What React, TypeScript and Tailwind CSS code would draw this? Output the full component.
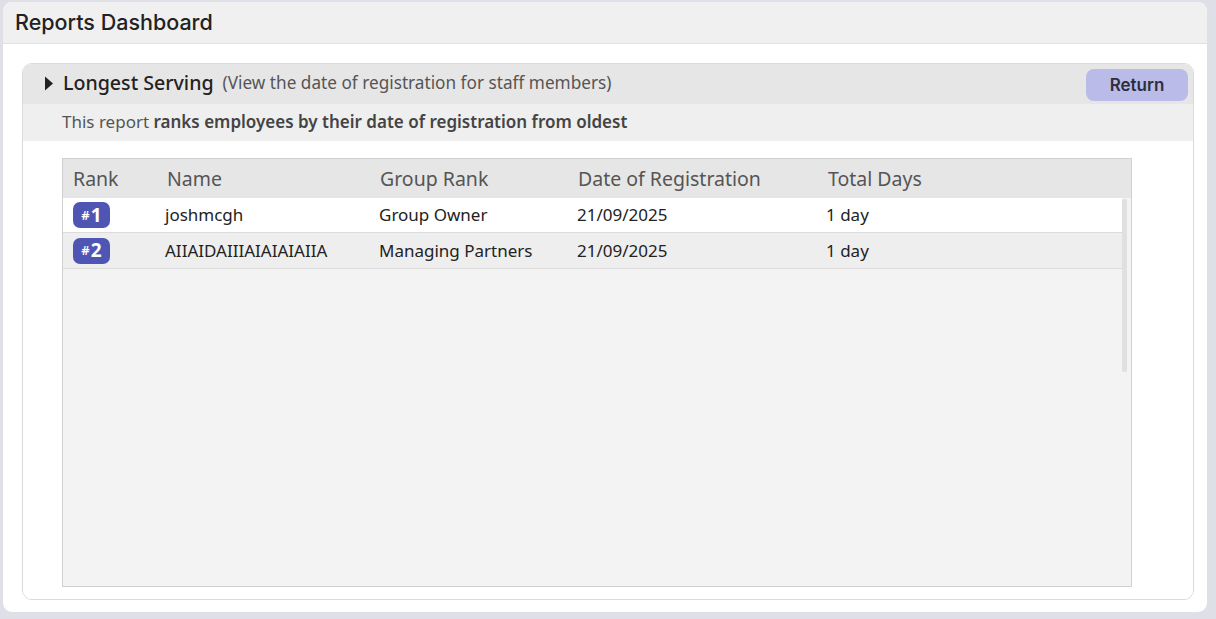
import React from "react";

const rows = [
  { rank: 1, name: "joshmcgh", group: "Group Owner", date: "21/09/2025", days: "1 day" },
  { rank: 2, name: "AIIAIDAIIIAIAIAIAIIA", group: "Managing Partners", date: "21/09/2025", days: "1 day" },
];

export default function App() {
  return (
    <div
      className="w-[1216px] h-[619px] bg-[#dfdfe7] pt-[2px] pl-[3px] pr-[9px] pb-[7px] flex"
      style={{ fontFamily: '"Noto Sans", sans-serif' }}
    >
      <div className="flex-1 flex flex-col bg-white rounded-[9px] overflow-hidden">
        <div className="h-[42px] shrink-0 bg-[#f0f0f0] border-b border-[#e2e2e2] flex items-center px-[12px]">
          <span
            className="text-[21.5px] text-[#222] font-medium"
            style={{ fontFamily: 'Inter, "Noto Sans", sans-serif' }}
          >
            Reports Dashboard
          </span>
        </div>
        <div className="flex-1 flex flex-col pt-[19px] pl-[19px] pr-[13px] pb-[12px]">
          <div className="flex-1 flex flex-col border border-[#dadada] rounded-[10px] overflow-hidden">
            <div className="h-[40px] shrink-0 bg-[#e6e6e6] flex items-center pl-[21px] pr-[5px]">
              <svg width="10" height="15" viewBox="0 0 10 15" className="mr-[9px] -mt-[2px]">
                <path d="M1 0.5 L9 7.5 L1 14.5 Z" fill="#222" />
              </svg>
              <span className="text-[19.6px] text-[#222] font-medium -mt-[3px]">Longest Serving</span>
              <span className="text-[17.2px] text-[#555] ml-[9px] -mt-[2px]">
                (View the date of registration for staff members)
              </span>
              <button
                className="ml-auto h-[32px] w-[102px] rounded-[8px] bg-[#babbe9] text-[17px] font-semibold text-[#2e2e3a] mt-[2px] pt-[2px]"
                style={{ fontFamily: 'Inter, "Noto Sans", sans-serif' }}
              >
                Return
              </button>
            </div>
            <div className="h-[37px] shrink-0 bg-[#efefef] flex items-center pl-[39px] text-[17px] text-[#555]">
              <span className="-mt-[1px]">
                This report <span className="font-semibold text-[#444]">ranks employees by their date of registration from oldest</span>
              </span>
            </div>
            <div className="flex-1 bg-white pt-[17px] pl-[39px] pb-[12px]">
              <div className="w-[1070px] h-full border border-[#d0d0d0] bg-[#f3f3f3] flex flex-col">
                <div className="h-[39px] shrink-0 bg-[#e6e6e6] flex items-center text-[19.5px] text-[#555]">
                  <div className="w-[95px] pl-[10px]">Rank</div>
                  <div className="w-[213px] pl-[9px]">Name</div>
                  <div className="w-[198px] pl-[9px]">Group Rank</div>
                  <div className="w-[250px] pl-[9px]">Date of Registration</div>
                  <div className="flex-1 pl-[9px]">Total Days</div>
                </div>
                <div className="flex-1 flex">
                  <div className="flex-1 flex flex-col">
                    {rows.map((r, i) => (
                      <div
                        key={r.rank}
                        className={
                          "flex items-center text-[17px] text-[#222] border-b border-[#dcdcdc] " +
                          (i === 0 ? "h-[35px] bg-white" : "h-[36px] bg-[#eeeeee]")
                        }
                      >
                        <div className="w-[95px] pl-[10px] flex items-center">
                          <span className="inline-flex items-center justify-center w-[37px] h-[26px] rounded-[7px] bg-[#4f55b2] text-white font-bold text-[19px] leading-none">
                            <span className="text-[13px] font-semibold mr-[1px]">#</span>
                            {r.rank}
                          </span>
                        </div>
                        <div className="w-[213px] pl-[7px]">{r.name}</div>
                        <div className="w-[198px] pl-[8px]">{r.group}</div>
                        <div className="w-[250px] pl-[8px]">{r.date}</div>
                        <div className="flex-1 pl-[7px]">{r.days}</div>
                      </div>
                    ))}
                  </div>
                  <div className="w-[9px] shrink-0 pt-[1px] pl-[0px]">
                    <div className="w-[5px] h-[173px] bg-[#e0e0e0] rounded-[2px]" />
                  </div>
                </div>
              </div>
            </div>
          </div>
        </div>
      </div>
    </div>
  );
}
